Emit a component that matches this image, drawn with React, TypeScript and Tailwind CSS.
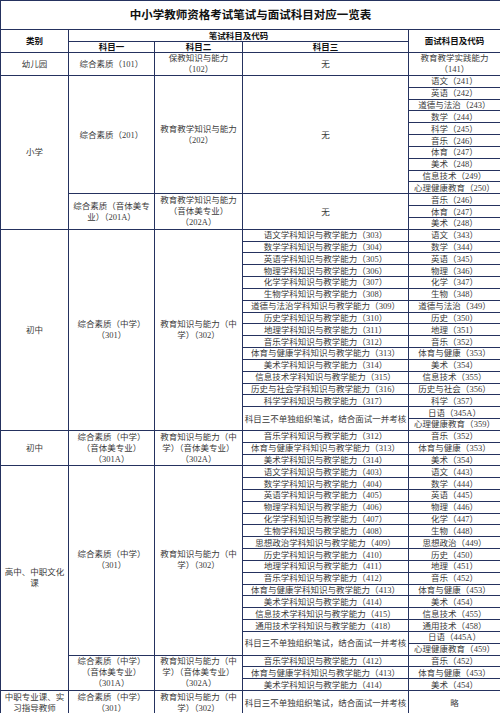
import type { ReactNode } from 'react'

const line = 'border border-[#25325f]'
const R = 'h-[11.83px]'

function Td({ children, rs, cs, b, className = '' }: { children?: ReactNode; rs?: number; cs?: number; b?: boolean; className?: string }) {
    return (
        <td
            rowSpan={rs}
            colSpan={cs}
            className={`${line} p-0 text-center align-middle whitespace-nowrap ${b ? 'font-bold text-[#111]' : ''} ${className}`}
        >
            {children}
        </td>
    )
}

// multi-line cells get the looser line height of the sheet
const ml = 'leading-[11px]'

const primary = ['语文（241）', '英语（242）', '道德与法治（243）', '数学（244）', '科学（245）', '音乐（246）', '体育（247）', '美术（248）', '信息技术（249）', '心理健康教育（250）']
const primaryArt = ['音乐（246）', '体育（247）', '美术（248）']

const junior: [string, string, string][] = [
    ['语文', '303', '343'], ['数学', '304', '344'], ['英语', '305', '345'], ['物理', '306', '346'],
    ['化学', '307', '347'], ['生物', '308', '348'], ['道德与法治', '309', '349'], ['历史', '310', '350'],
    ['地理', '311', '351'], ['音乐', '312', '352'], ['体育与健康', '313', '353'], ['美术', '314', '354'],
    ['信息技术', '315', '355'], ['历史与社会', '316', '356'], ['科学', '317', '357'],
]
const juniorArt: [string, string, string][] = [['音乐', '312', '352'], ['体育与健康', '313', '353'], ['美术', '314', '354']]

const senior: [string, string, string][] = [
    ['语文', '403', '443'], ['数学', '404', '444'], ['英语', '405', '445'], ['物理', '406', '446'],
    ['化学', '407', '447'], ['生物', '408', '448'], ['思想政治', '409', '449'], ['历史', '410', '450'],
    ['地理', '411', '451'], ['音乐', '412', '452'], ['体育与健康', '413', '453'], ['美术', '414', '454'],
    ['信息技术', '415', '455'], ['通用技术', '418', '458'],
]
const seniorArt: [string, string, string][] = [['音乐', '412', '452'], ['体育与健康', '413', '453'], ['美术', '414', '454']]

const noWritten = '科目三不单独组织笔试，结合面试一并考核'

// rows with 科目三 + 面试 cells; lead cells go in front of the first one
function subjectRows(list: [string, string, string][], lead?: ReactNode) {
    return list.map(([s, a, b], i) => (
        <tr key={s + a} className={R}>
            {i === 0 && lead}
            <Td>{s}学科知识与教学能力（{a}）</Td>
            <Td>{s}（{b}）</Td>
        </tr>
    ))
}

function extraRows(code1: string, code2: string) {
    return [
        <tr key={code1} className={R}>
            <Td rs={2}>{noWritten}</Td>
            <Td>日语（{code1}）</Td>
        </tr>,
        <tr key={code2} className={R}>
            <Td>心理健康教育（{code2}）</Td>
        </tr>,
    ]
}

export default function App() {
    return (
        <div className="w-[500px] h-[713px] overflow-hidden bg-white">
            <table className="w-[500px] table-fixed border-collapse text-[8.5px] leading-[10px] text-[#3a3a3a] [font-family:'Liberation_Serif','Noto_Sans_CJK_SC',serif]">
                <colgroup>
                    <col className="w-[68px]" />
                    <col className="w-[86px]" />
                    <col className="w-[88px]" />
                    <col className="w-[166px]" />
                    <col className="w-[92px]" />
                </colgroup>
                <tbody>
                    <tr className="h-[29px]">
                        <Td cs={5} className="font-bold text-[11.5px] leading-[14px] text-[#111]">中小学教师资格考试笔试与面试科目对应一览表</Td>
                    </tr>
                    <tr className="h-[12px]">
                        <Td rs={2} b>类别</Td>
                        <Td cs={3} b>笔试科目及代码</Td>
                        <Td rs={2} b>面试科目及代码</Td>
                    </tr>
                    <tr className="h-[11px]">
                        <Td b>科目一</Td>
                        <Td b>科目二</Td>
                        <Td b>科目三</Td>
                    </tr>

                    {/* 幼儿园 */}
                    <tr className="h-[23px]">
                        <Td>幼儿园</Td>
                        <Td>综合素质（101）</Td>
                        <Td className={ml}>保教知识与能力<br />（102）</Td>
                        <Td>无</Td>
                        <Td className={ml}>教育教学实践能力<br />（141）</Td>
                    </tr>

                    {/* 小学 */}
                    {primary.map((p, i) => (
                        <tr key={p} className={R}>
                            {i === 0 && (
                                <>
                                    <Td rs={13}>小学</Td>
                                    <Td rs={10}>综合素质（201）</Td>
                                    <Td rs={10} className={ml}>教育教学知识与能力<br />（202）</Td>
                                    <Td rs={10}>无</Td>
                                </>
                            )}
                            <Td>{p}</Td>
                        </tr>
                    ))}
                    {primaryArt.map((p, i) => (
                        <tr key={'a' + p} className={R}>
                            {i === 0 && (
                                <>
                                    <Td rs={3} className={ml}>综合素质（音体美专<br />业）（201A）</Td>
                                    <Td rs={3} className={ml}>教育教学知识与能力<br />（音体美专业）<br />（202A）</Td>
                                    <Td rs={3}>无</Td>
                                </>
                            )}
                            <Td>{p}</Td>
                        </tr>
                    ))}

                    {/* 初中 */}
                    {subjectRows(junior, (
                        <>
                            <Td rs={17}>初中</Td>
                            <Td rs={17} className={ml}>综合素质（中学）<br />（301）</Td>
                            <Td rs={17} className={ml}>教育知识与能力（中<br />学）（302）</Td>
                        </>
                    ))}
                    {extraRows('345A', '359')}
                    {subjectRows(juniorArt, (
                        <>
                            <Td rs={3}>初中</Td>
                            <Td rs={3} className={ml}>综合素质（中学）<br />（音体美专业）<br />（301A）</Td>
                            <Td rs={3} className={ml}>教育知识与能力（中<br />学）（音体美专业）<br />（302A）</Td>
                        </>
                    ))}

                    {/* 高中 */}
                    {subjectRows(senior, (
                        <>
                            <Td rs={19} className={ml}>高中、中职文化<br />课</Td>
                            <Td rs={16} className={ml}>综合素质（中学）<br />（301）</Td>
                            <Td rs={16} className={ml}>教育知识与能力（中<br />学）（302）</Td>
                        </>
                    ))}
                    {extraRows('445A', '459')}
                    {subjectRows(seniorArt, (
                        <>
                            <Td rs={3} className={ml}>综合素质（中学）<br />（音体美专业）<br />（301A）</Td>
                            <Td rs={3} className={ml}>教育知识与能力（中<br />学）（音体美专业）<br />（302A）</Td>
                        </>
                    ))}

                    {/* 中职 */}
                    <tr className="h-[25px]">
                        <Td className={ml}>中职专业课、实<br />习指导教师</Td>
                        <Td className={ml}>综合素质（中学）<br />（301）</Td>
                        <Td className={ml}>教育知识与能力（中<br />学）（302）</Td>
                        <Td>{noWritten}</Td>
                        <Td>略</Td>
                    </tr>
                </tbody>
            </table>
        </div>
    )
}
